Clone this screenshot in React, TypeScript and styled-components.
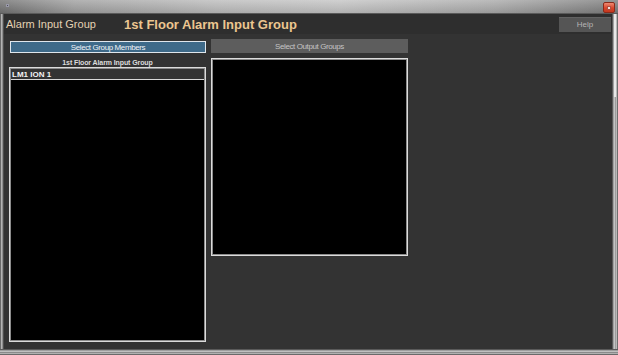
import React from 'react';
import styled, { createGlobalStyle } from 'styled-components';

const Global = createGlobalStyle`
  html, body { margin: 0; padding: 0; background: #6b6b6b; }
  body { font-family: "Liberation Sans", Arial, sans-serif; }
  * { box-sizing: border-box; }
`;

const Window = styled.div`
  width: 618px;
  height: 355px;
  display: flex;
  flex-direction: column;
  overflow: hidden;
  background: #7a7a7a;
`;

const TitleBar = styled.div`
  height: 14px;
  flex: none;
  display: flex;
  align-items: flex-start;
  justify-content: space-between;
  padding: 2px 3px 0 6px;
  background:
    linear-gradient(to bottom, rgba(255,255,255,0.18), rgba(0,0,0,0.1)),
    linear-gradient(to right, #747474 0%, #a2a2a2 12%, #bebebe 35%, #c6c6c6 55%, #acacac 80%, #7e7e7e 100%);
  border-bottom: 1px solid #5a5a5a;
`;

const AppIcon = styled.div`
  width: 3px;
  height: 3px;
  margin-top: 2px;
  background: #4a4a5a;
  border: 1px solid #9a9aa8;
`;

const CloseButton = styled.div`
  width: 12px;
  height: 11px;
  border-radius: 2px;
  border: 1px solid #8a2a1a;
  background: linear-gradient(to bottom, #f08a72, #d8452c 55%, #c4381f);
  display: flex;
  align-items: center;
  justify-content: center;
`;

const CloseMark = styled.div`
  width: 4px;
  height: 4px;
  background: #f4e0dc;
  border: 1px solid #b05040;
`;

const Body = styled.div`
  flex: 1;
  display: flex;
  min-height: 0;
`;

const LeftFrame = styled.div`
  width: 4px;
  flex: none;
  background: linear-gradient(to right, #6a6a6a 0 1px, #b4b4b4 1px 2px, #8e8e8e 2px 3px, #4e4e4e 3px 4px);
`;

const RightFrame = styled.div`
  width: 6px;
  flex: none;
  display: flex;
  flex-direction: column;
  background: linear-gradient(to right, #5a5a5a 0 1px, #a0a0a0 1px 2px, #c4c4c4 2px 3px, #9c9c9c 3px 4px, #b8b8b8 4px 5px, #6e6e6e 5px 6px);
`;

const ScrollThumb = styled.div`
  height: 83px;
  width: 2px;
  margin-left: 2px;
  background: #e8e8e8;
`;

const BottomFrame = styled.div`
  height: 6px;
  flex: none;
  background: linear-gradient(to bottom, #5a5a5a 0 1px, #9e9e9e 1px 2px, #c0c0c0 2px 3px, #8a8a8a 3px 4px, #b0b0b0 4px 5px, #6a6a6a 5px 6px);
`;

const Content = styled.div`
  flex: 1;
  display: flex;
  flex-direction: column;
  background: #333333;
  min-width: 0;
`;

const Header = styled.div`
  height: 20px;
  flex: none;
  display: flex;
  align-items: center;
  padding: 0 1px 0 2px;
  background: #2e2e2e;
`;

const PageTitle = styled.div`
  width: 118px;
  font-size: 11px;
  color: #e4d2b4;
  white-space: nowrap;
`;

const GroupTitle = styled.div`
  flex: 1;
  font-size: 13px;
  font-weight: bold;
  color: #ecc690;
  white-space: nowrap;
`;

const HelpButton = styled.div`
  width: 52px;
  height: 15px;
  background: #555555;
  border-top: 1px solid #626262;
  color: #b4b4b4;
  font-size: 8px;
  display: flex;
  align-items: center;
  justify-content: center;
`;

const Main = styled.div`
  flex: 1;
  display: grid;
  grid-template-columns: 197px 197px;
  column-gap: 5px;
  align-items: start;
  padding-left: 5px;
  min-height: 0;
`;

const Column = styled.div`
  display: flex;
  flex-direction: column;
`;

const TabButton = styled.div<{ $active?: boolean }>`
  height: ${p => (p.$active ? '12px' : '14px')};
  margin-top: ${p => (p.$active ? '7px' : '5px')};
  margin-left: ${p => (p.$active ? '1px' : '0')};
  background: ${p => (p.$active ? '#3e6a89' : '#5d5d5d')};
  border: ${p => (p.$active ? '1px solid #dfe6ec' : 'none')};
  color: ${p => (p.$active ? '#eef2f6' : '#c4c4c4')};
  font-size: 8px;
  letter-spacing: -0.4px;
  display: flex;
  align-items: center;
  justify-content: center;
  white-space: nowrap;
`;

const ListLabel = styled.div`
  height: 14px;
  font-size: 7px;
  font-weight: bold;
  letter-spacing: -0.1px;
  color: #dcdcdc;
  display: flex;
  align-items: flex-end;
  justify-content: center;
  padding-bottom: 1px;
`;

const ListBox = styled.div<{ $height: number; $gap?: number }>`
  height: ${p => p.$height}px;
  margin-top: ${p => p.$gap ?? 0}px;
  background: #000;
  border: 1px solid #dcdcdc;
  box-shadow: inset 0 0 0 1px #8c8c8c;
  display: flex;
  flex-direction: column;
  padding: 1px;
`;

const ListHeader = styled.div`
  height: 11px;
  background: #333333;
  border-bottom: 1px solid #d8d8d8;
  color: #f4f4f4;
  font-size: 8px;
  font-weight: bold;
  padding-left: 1px;
  display: flex;
  align-items: center;
`;

export default function App() {
  return (
    <>
      <Global />
      <Window>
        <TitleBar>
          <AppIcon />
          <CloseButton>
            <CloseMark />
          </CloseButton>
        </TitleBar>
        <Body>
          <LeftFrame />
          <Content>
            <Header>
              <PageTitle>Alarm Input Group</PageTitle>
              <GroupTitle>1st Floor Alarm Input Group</GroupTitle>
              <HelpButton>Help</HelpButton>
            </Header>
            <Main>
              <Column>
                <TabButton $active>Select Group Members</TabButton>
                <ListLabel>1st Floor Alarm Input Group</ListLabel>
                <ListBox $height={275}>
                  <ListHeader>LM1 ION 1</ListHeader>
                </ListBox>
              </Column>
              <Column>
                <TabButton>Select Output Groups</TabButton>
                <ListBox $height={198} $gap={5} />
              </Column>
            </Main>
          </Content>
          <RightFrame>
            <ScrollThumb />
          </RightFrame>
        </Body>
        <BottomFrame />
      </Window>
    </>
  );
}
